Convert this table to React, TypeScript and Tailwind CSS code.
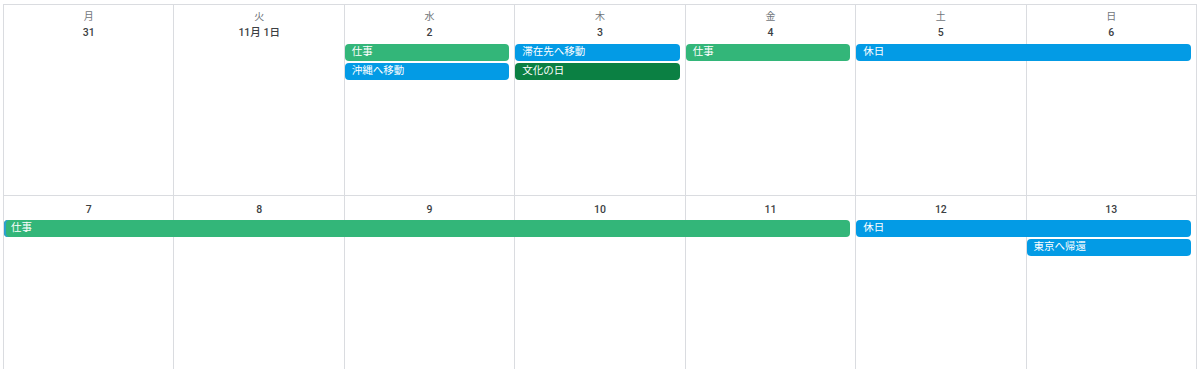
import React from "react";

const COL_START = ["col-start-1", "col-start-2", "col-start-3", "col-start-4", "col-start-5", "col-start-6", "col-start-7"];

type Ev = { title: string; cls: string };

function DayCell({ idx, weekday, date }: { idx: number; weekday?: string; date: string }) {
  return (
    <div className={`${COL_START[idx]} row-span-full row-start-1 border-r border-b border-[#dadce0] flex flex-col items-center ${weekday ? "pt-[5px]" : "pt-[6px]"}`}>
      {weekday && <div className="text-[10px] leading-[14px] text-[#70757a]">{weekday}</div>}
      <div className={`text-[10.5px] leading-[16px] font-medium text-[#3c4043] ${weekday ? "mt-[1px]" : ""}`}>{date}</div>
    </div>
  );
}

function Event({ title, cls }: Ev) {
  return (
    <div className={`${cls} h-[17px] mr-[6px] rounded-[4px] pl-[7px] flex items-center text-[10.5px] leading-none text-white z-10 overflow-hidden whitespace-nowrap`}>
      {title}
    </div>
  );
}

const SAGE = "bg-[#33b679]";
const PEACOCK = "bg-[#039be5]";
const BASIL = "bg-[#0b8043]";

export default function App() {
  const week1 = [
    { w: "月", d: "31" },
    { w: "火", d: "11月 1日" },
    { w: "水", d: "2" },
    { w: "木", d: "3" },
    { w: "金", d: "4" },
    { w: "土", d: "5" },
    { w: "日", d: "6" },
  ];
  const week2 = ["7", "8", "9", "10", "11", "12", "13"];
  return (
    <div className="w-[1200px] h-[369px] overflow-hidden bg-white" style={{ fontFamily: "Roboto, 'Noto Sans CJK JP', sans-serif" }}>
      <div className="ml-[3px] mt-[4px] w-[1194px] border-t border-l border-[#dadce0]">
        <div className="grid grid-cols-7 grid-rows-[39px_19px_19px_1fr] h-[191px]">
          {week1.map((c, i) => (
            <DayCell key={i} idx={i} weekday={c.w} date={c.d} />
          ))}
          <Event title="仕事" cls={`${SAGE} col-start-3 row-start-2`} />
          <Event title="沖縄へ移動" cls={`${PEACOCK} col-start-3 row-start-3`} />
          <Event title="滞在先へ移動" cls={`${PEACOCK} col-start-4 row-start-2`} />
          <Event title="文化の日" cls={`${BASIL} col-start-4 row-start-3`} />
          <Event title="仕事" cls={`${SAGE} col-start-5 row-start-2`} />
          <Event title="休日" cls={`${PEACOCK} col-start-6 col-span-2 row-start-2`} />
        </div>
        <div className="grid grid-cols-7 grid-rows-[24px_19px_19px_1fr] h-[191px]">
          {week2.map((d, i) => (
            <DayCell key={i} idx={i} date={d} />
          ))}
          <Event title="仕事" cls={`${SAGE} col-start-1 col-span-5 row-start-2 shadow-[inset_2px_0_0_#2c9fd0]`} />
          <Event title="休日" cls={`${PEACOCK} col-start-6 col-span-2 row-start-2`} />
          <Event title="東京へ帰還" cls={`${PEACOCK} col-start-7 row-start-3`} />
        </div>
      </div>
    </div>
  );
}
